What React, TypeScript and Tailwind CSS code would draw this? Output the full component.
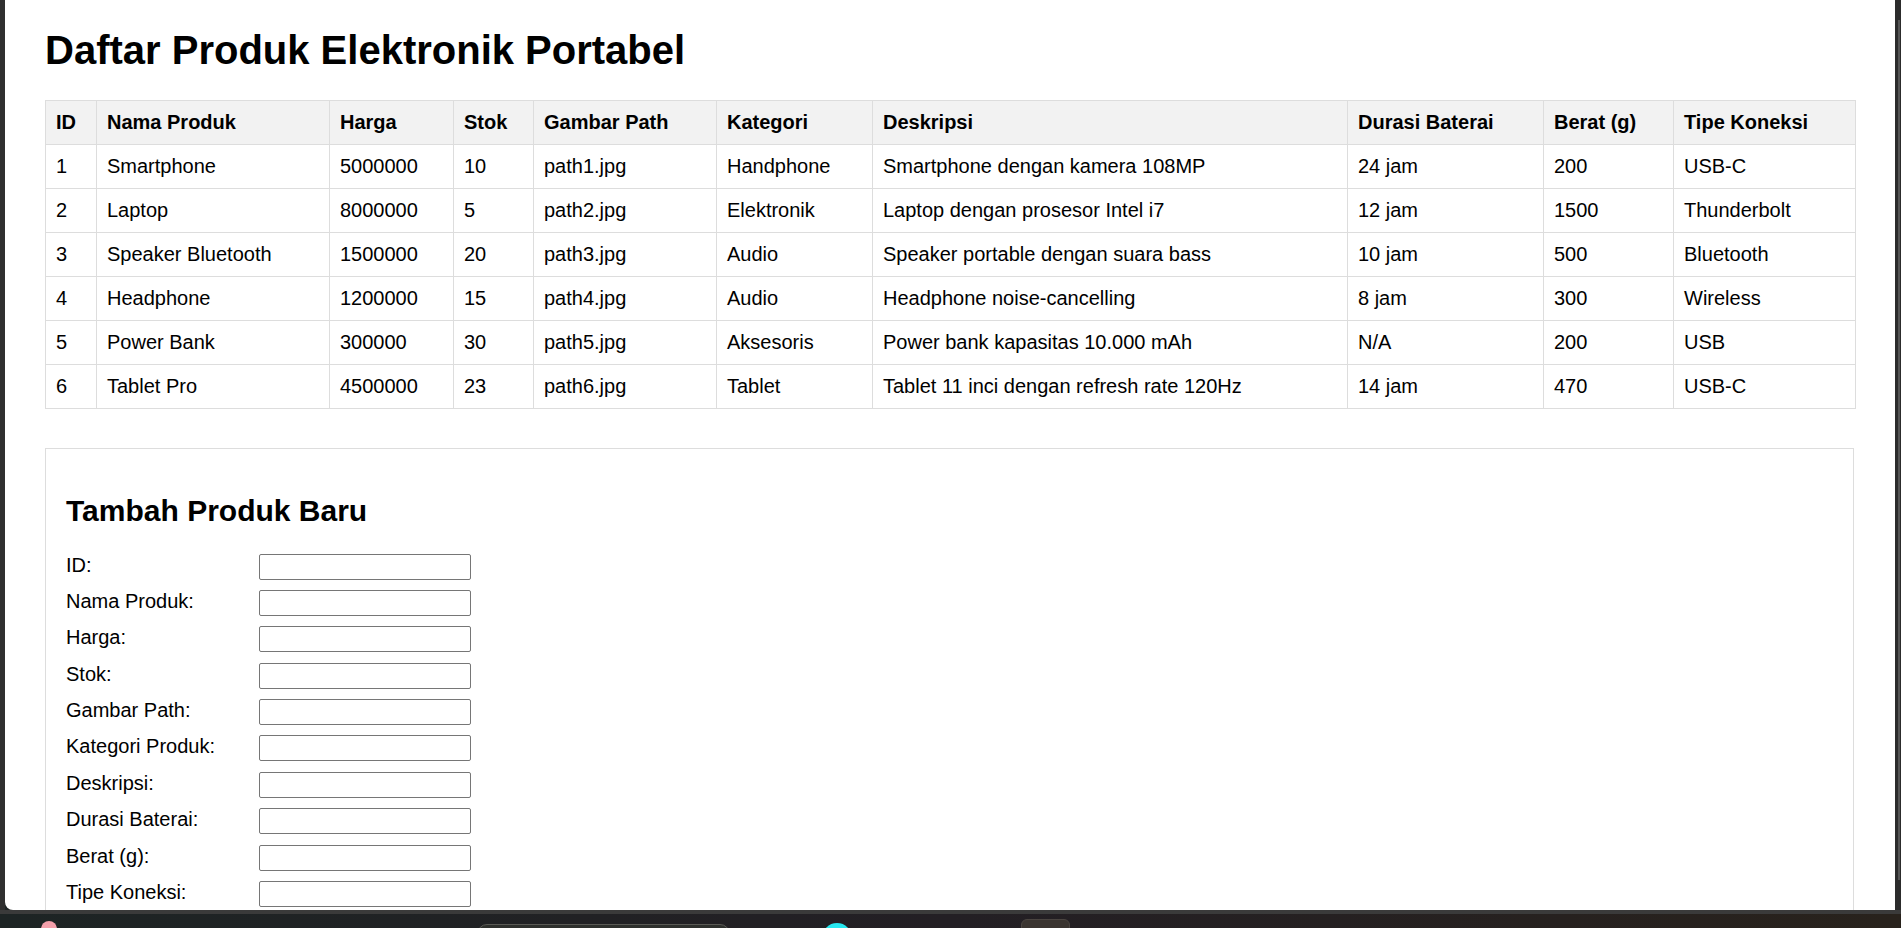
const produk = [
  { id: 1, nama: "Smartphone", harga: "5000000", stok: 10, gambar: "path1.jpg", kategori: "Handphone", deskripsi: "Smartphone dengan kamera 108MP", durasi: "24 jam", berat: 200, koneksi: "USB-C" },
  { id: 2, nama: "Laptop", harga: "8000000", stok: 5, gambar: "path2.jpg", kategori: "Elektronik", deskripsi: "Laptop dengan prosesor Intel i7", durasi: "12 jam", berat: 1500, koneksi: "Thunderbolt" },
  { id: 3, nama: "Speaker Bluetooth", harga: "1500000", stok: 20, gambar: "path3.jpg", kategori: "Audio", deskripsi: "Speaker portable dengan suara bass", durasi: "10 jam", berat: 500, koneksi: "Bluetooth" },
  { id: 4, nama: "Headphone", harga: "1200000", stok: 15, gambar: "path4.jpg", kategori: "Audio", deskripsi: "Headphone noise-cancelling", durasi: "8 jam", berat: 300, koneksi: "Wireless" },
  { id: 5, nama: "Power Bank", harga: "300000", stok: 30, gambar: "path5.jpg", kategori: "Aksesoris", deskripsi: "Power bank kapasitas 10.000 mAh", durasi: "N/A", berat: 200, koneksi: "USB" },
  { id: 6, nama: "Tablet Pro", harga: "4500000", stok: 23, gambar: "path6.jpg", kategori: "Tablet", deskripsi: "Tablet 11 inci dengan refresh rate 120Hz", durasi: "14 jam", berat: 470, koneksi: "USB-C" },
];

const headers = ["ID", "Nama Produk", "Harga", "Stok", "Gambar Path", "Kategori", "Deskripsi", "Durasi Baterai", "Berat (g)", "Tipe Koneksi"];

const fields = ["ID:", "Nama Produk:", "Harga:", "Stok:", "Gambar Path:", "Kategori Produk:", "Deskripsi:", "Durasi Baterai:", "Berat (g):", "Tipe Koneksi:"];

const cell = "border border-[#dddddd] px-[10px] py-[10px] text-left align-top leading-[23px]";

export default function App() {
  return (
    <div className="h-[928px] w-full overflow-hidden bg-[#1e2424] flex flex-col font-['Liberation_Sans',Arial,sans-serif] text-black">
      {/* window */}
      <div className="h-[910px] flex shrink-0">
        <div className="w-[5px] bg-[#2f2f2f]" />
        <div className="flex-1 bg-white rounded-bl-[8px] overflow-hidden pl-[40px] pr-[41px]">
          <h1 className="text-[40px] font-bold leading-[46px] mt-[27px] mb-[27px]">Daftar Produk Elektronik Portabel</h1>

          <table className="w-[1810px] table-fixed border-collapse text-[20px]">
            <colgroup>
              <col className="w-[51px]" />
              <col className="w-[233px]" />
              <col className="w-[124px]" />
              <col className="w-[80px]" />
              <col className="w-[183px]" />
              <col className="w-[156px]" />
              <col className="w-[475px]" />
              <col className="w-[196px]" />
              <col className="w-[130px]" />
              <col className="w-[182px]" />
            </colgroup>
            <thead>
              <tr className="bg-[#f2f2f2]">
                {headers.map((h) => (
                  <th key={h} className={cell + " font-bold"}>{h}</th>
                ))}
              </tr>
            </thead>
            <tbody>
              {produk.map((p) => (
                <tr key={p.id}>
                  <td className={cell}>{p.id}</td>
                  <td className={cell}>{p.nama}</td>
                  <td className={cell}>{p.harga}</td>
                  <td className={cell}>{p.stok}</td>
                  <td className={cell}>{p.gambar}</td>
                  <td className={cell}>{p.kategori}</td>
                  <td className={cell}>{p.deskripsi}</td>
                  <td className={cell}>{p.durasi}</td>
                  <td className={cell}>{p.berat}</td>
                  <td className={cell}>{p.koneksi}</td>
                </tr>
              ))}
            </tbody>
          </table>

          {/* Form */}
          <div className="mt-[39px] border border-[#dddddd] p-[20px] text-[20px]">
            <h2 className="text-[30px] font-bold leading-[34.5px] mt-[25px] mb-[25px]">Tambah Produk Baru</h2>
            <form className="flex flex-col">
              {fields.map((f) => (
                <div key={f} className="flex items-start mb-[10.4px]">
                  <label className="w-[193px] leading-[23px]">{f}</label>
                  <input type="text" className="w-[212px] h-[26px] border border-[#767676] rounded-[2px] bg-white" />
                </div>
              ))}
            </form>
          </div>
        </div>
        <div className="w-[6px] bg-[#2c2c2c] flex">
          <div className="w-[3px]" />
          <div className="w-[2px] mt-[20px] h-[860px] bg-[#555555]" />
        </div>
      </div>
      <div className="h-[4px] bg-[#3a3a3a] shrink-0" />

      {/* taskbar */}
      <div className="relative flex-1 bg-gradient-to-r from-[#1d2424] via-[#231f24] to-[#28221c]">
        <div className="absolute left-[41px] top-[7px] w-[16px] h-[16px] rounded-full bg-[#f4a0ab]" />
        <div className="absolute left-[477px] top-[10px] w-[253px] h-[20px] rounded-[10px] border border-[#5a5a55] bg-[#2e302d]" />
        <div className="absolute left-[822px] top-[9px] w-[30px] h-[30px] rounded-full bg-[#27e8f0]" />
        <div className="absolute left-[1021px] top-[5px] w-[49px] h-[30px] rounded-[6px] border border-[#4a4440] bg-[#3a3430]" />
      </div>
    </div>
  );
}
